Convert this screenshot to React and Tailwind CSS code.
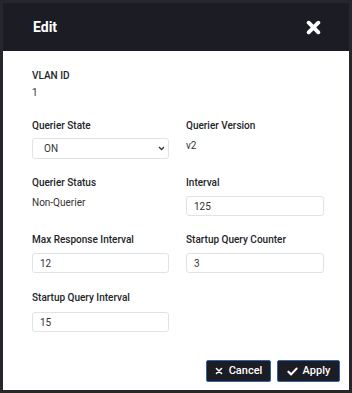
import React from 'react';

// Edit dialog for IGMP snooping querier settings
const FONT = { fontFamily: 'Roboto, "Liberation Sans", sans-serif' };

function Label({ children }) {
  return <div className="text-[10px] leading-[14px] font-medium text-[#212529]">{children}</div>;
}

function Value({ children, className = '' }) {
  return <div className={`text-[10px] leading-[14px] text-[#333] ${className}`}>{children}</div>;
}

function Field({ value, className = '' }) {
  return (
    <input
      readOnly
      value={value}
      className={`block w-full h-[20px] border border-[#dfe2e6] rounded-[3px] pl-[7px] text-[10px] text-[#333] outline-none ${className}`}
      style={FONT}
    />
  );
}

function XIcon({ size = 14, width = 3.5 }) {
  return (
    <svg width={size} height={size} viewBox="0 0 14 14">
      <path d="M2.5 2.5 L11.5 11.5 M11.5 2.5 L2.5 11.5" stroke="currentColor" strokeWidth={width} strokeLinecap="round" fill="none" />
    </svg>
  );
}

function CheckIcon() {
  return (
    <svg width="11" height="9" viewBox="0 0 12 10">
      <path d="M1.5 5.2 L4.5 8.2 L10.5 1.8" stroke="currentColor" strokeWidth="2.4" strokeLinecap="round" strokeLinejoin="round" fill="none" />
    </svg>
  );
}

export default function App() {
  return (
    <div className="w-[352px] h-[393px] bg-white border-[3px] border-[#26262c] flex flex-col" style={FONT}>
      {/* Header */}
      <div className="h-[48px] bg-[#1c1c24] flex items-center justify-between pl-[30px] pr-[28px] shrink-0">
        <span className="text-white text-[14px] font-bold">Edit</span>
        <span className="text-white"><XIcon size={15} width={3.6} /></span>
      </div>

      {/* Body */}
      <div className="pl-[29px] pt-[18px] flex-1 flex flex-col">
        <div>
          <Label>VLAN ID</Label>
          <Value className="mt-[3px]">1</Value>
        </div>

        <div className="grid grid-cols-[137px_138px] gap-x-[17px] mt-[19px]">
          <div>
            <Label>Querier State</Label>
            <div className="relative mt-[5px]">
              <select
                className="block w-full h-[21px] appearance-none border border-[#dfe2e6] rounded-[3px] pl-[11px] text-[10px] text-[#333] bg-white outline-none"
                style={FONT}
                defaultValue="ON"
              >
                <option>ON</option>
                <option>OFF</option>
              </select>
              <svg className="absolute right-[4px] top-[8px] pointer-events-none" width="7" height="5" viewBox="0 0 7 5">
                <path d="M1 1 L3.5 3.5 L6 1" stroke="#333" strokeWidth="1.3" fill="none" />
              </svg>
            </div>
          </div>
          <div>
            <Label>Querier Version</Label>
            <Value className="mt-[6px]">v2</Value>
          </div>
        </div>

        <div className="grid grid-cols-[137px_138px] gap-x-[17px] mt-[17px]">
          <div>
            <Label>Querier Status</Label>
            <Value className="mt-[6px]">Non-Querier</Value>
          </div>
          <div>
            <Label>Interval</Label>
            <Field value="125" className="mt-[6px]" />
          </div>
        </div>

        <div className="grid grid-cols-[137px_138px] gap-x-[17px] mt-[17px]">
          <div>
            <Label>Max Response Interval</Label>
            <Field value="12" className="mt-[6px]" />
          </div>
          <div>
            <Label>Startup Query Counter</Label>
            <Field value="3" className="mt-[6px]" />
          </div>
        </div>

        <div className="grid grid-cols-[137px_138px] gap-x-[17px] mt-[18px]">
          <div>
            <Label>Startup Query Interval</Label>
            <Field value="15" className="mt-[7px]" />
          </div>
        </div>

        {/* Footer */}
        <div className="flex justify-end gap-[6px] pr-[9px] mt-[28px]">
          <button className="h-[22px] w-[65px] bg-[#1c1c24] border border-[#2f63a8] rounded-[2px] text-white text-[11px] font-medium flex items-center justify-center gap-[6px]">
            <XIcon size={8} width={2.6} />
            Cancel
          </button>
          <button className="h-[22px] w-[63px] bg-[#1c1c24] border border-[#2f63a8] rounded-[2px] text-white text-[11px] font-medium flex items-center justify-center gap-[5px]">
            <CheckIcon />
            Apply
          </button>
        </div>
      </div>
    </div>
  );
}
